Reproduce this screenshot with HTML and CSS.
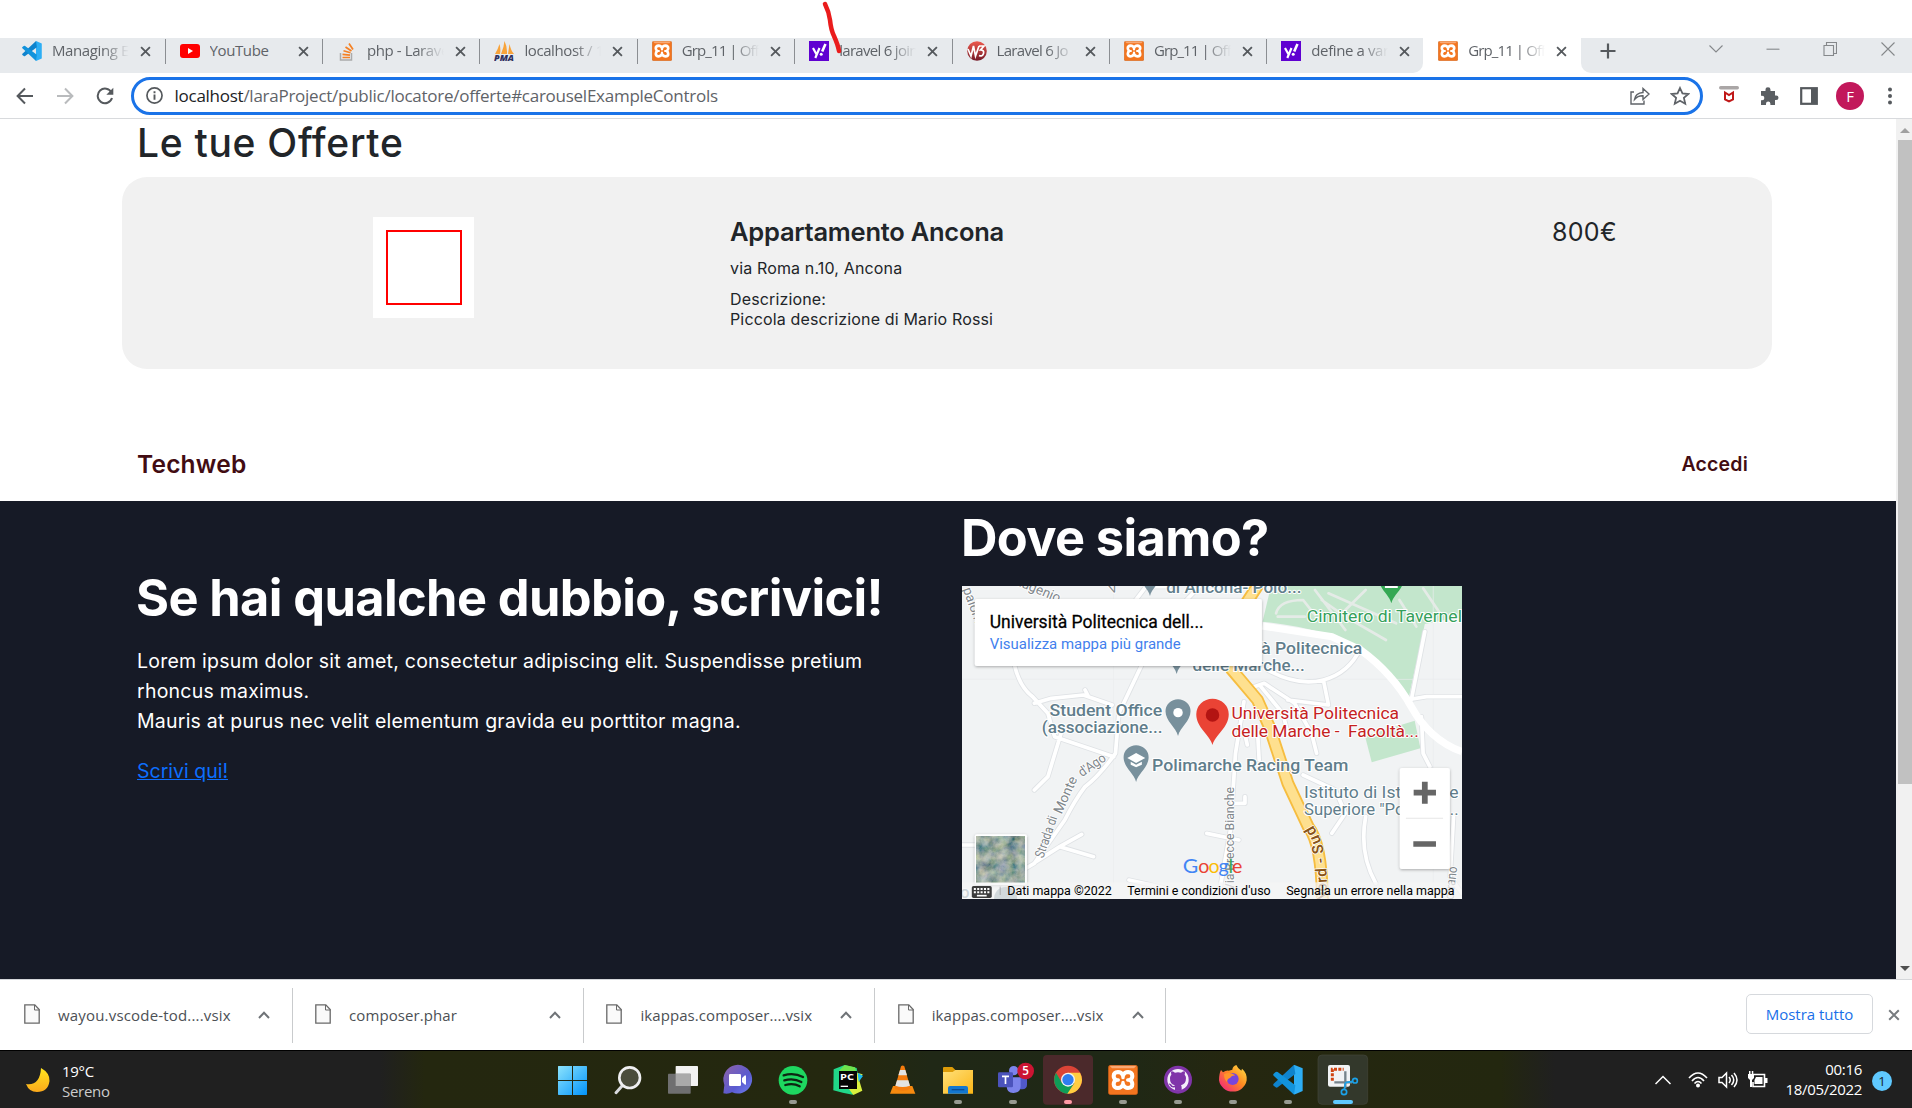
FILE: index.html
```html
<!DOCTYPE html>
<html lang="it">
<head>
<meta charset="utf-8">
<title>Grp_11 | Offerte</title>
<link rel="stylesheet" href="styles.css">
</head>
<body>
<svg class="defs" width="0" height="0">
  <defs>
    <symbol id="close" viewBox="0 0 12 12"><path d="M1.2 1.2 10.8 10.8M10.8 1.2 1.2 10.8" fill="none" stroke="currentColor" stroke-width="2"/></symbol>
    <symbol id="xampp" viewBox="0 0 90 90">
      <rect x="1" y="1" width="88" height="88" rx="7" fill="#f3751f" stroke="#c25a17" stroke-width="2"/><path d="M5 2h80l-7 8H12z" fill="#f9a974"/>
      <path d="M45 31Q40 21 30 21Q17 22 17 33Q17 41 24 45Q17 49 17 58Q18 69 30 69Q40 69 45 59Q50 69 60 69Q73 69 73 58Q73 49 66 45Q73 41 73 33Q73 22 60 21Q50 21 45 31Z" fill="#f3751f" stroke="#fff" stroke-width="12" stroke-linejoin="round"/>
      <path d="M22 45H31M59 45H68M45 28V38M45 52V62" stroke="#fff" stroke-width="10" stroke-linecap="round"/>
    </symbol>
    <symbol id="vscode" viewBox="0 0 90 90">
      <path d="M63 0 89 11V79L63 90Z" fill="#2daef5"/><path d="M63 0 2 57q-3 3 0 6l6 5q3 2 6 0L67 28Z" fill="#0f83cd"/><path d="M63 90 2 33q-3-3 0-6l6-5q3-2 6 0L67 62Z" fill="#1293dc"/>
    </symbol>
    <symbol id="yahoo" viewBox="0 0 20 20"><rect width="20" height="20" fill="#5f01d1"/><path d="M4 7 7.3 13M10.5 7 6.3 17" stroke="#fff" stroke-width="2.2" fill="none"/><path d="m16.5 3-3.3 7.5" stroke="#fff" stroke-width="2.6"/><circle cx="12.2" cy="13.3" r="1.5" fill="#fff"/></symbol>
    <symbol id="file" viewBox="0 0 16 20"><path d="M.8.8h10L15.2 5.500V19.200H.8z" fill="#fafafa" stroke="#696969" stroke-width="1.300"/><path d="M10.500 1v5h5" fill="none" stroke="#696969"/></symbol>
    <symbol id="up" viewBox="0 0 12 8"><path d="M1 7 6 1.800 11 7" fill="none" stroke="#6f7377" stroke-width="2"/></symbol>
    <linearGradient id="win" x1="0" y1="0" x2="1" y2="1"><stop stop-color="#8ce3fd"/><stop offset="1" stop-color="#0294fb"/></linearGradient>
    <linearGradient id="moon" x1="0" y1="0" x2="0" y2="1"><stop stop-color="#ffe51f"/><stop offset="1" stop-color="#fba91b"/></linearGradient>
    <linearGradient id="chat" x1="0" y1="0" x2="1" y2="1"><stop stop-color="#8e62a8"/><stop offset=".6" stop-color="#5b5bd0"/><stop offset="1" stop-color="#6e7ff0"/></linearGradient>
    <linearGradient id="folder" x1="0" y1="0" x2="1" y2="1"><stop stop-color="#ffe07a"/><stop offset="1" stop-color="#fbb616"/></linearGradient>
    <linearGradient id="fox" x1="1" y1="0" x2="0" y2="1"><stop stop-color="#ffe84a"/><stop offset=".45" stop-color="#ff8a20"/><stop offset="1" stop-color="#f0148c"/></linearGradient>
    <linearGradient id="w3" x1="0" y1="0" x2="0" y2="1"><stop stop-color="#ef5a4e"/><stop offset="1" stop-color="#741a28"/></linearGradient>
  </defs>
</svg>

<div class="tabs">
  <div class="tab"><svg class="fav"><use href="#vscode"/></svg><span class="label">Managing Ex</span><svg class="x"><use href="#close"/></svg></div>
  <div class="tab"><svg class="fav" viewBox="0 0 20 20"><rect y="3" width="20" height="14" rx="3" fill="#f00"/><path d="M8 7v6l5-3z" fill="#fff"/></svg><span class="label full">YouTube</span><svg class="x"><use href="#close"/></svg></div>
  <div class="tab"><svg class="fav" viewBox="0 0 20 20"><path d="M3.500 12v7h11v-7" fill="none" stroke="#aaa" stroke-width="1.500"/><path d="M5.500 16.500h7.500M5.500 13.300l7.500.8M6.500 9.800l7 2M8.500 6l6 4M12 2.500l4 6" stroke="#f48024" stroke-width="1.700"/></svg><span class="label">php - Larave</span><svg class="x"><use href="#close"/></svg></div>
  <div class="tab"><svg class="fav" viewBox="0 0 20 20"><path d="M1 13Q4 8 5.500 3Q7 8 6 13zM7 13Q10 6 10.500 0Q13.500 6 13 13zM14 13 15.500 3Q17 10 20 13z" fill="#f8a33a"/><text x="0" y="19.500" font-size="8" font-weight="800" font-style="italic" fill="#2e3060" textLength="20" lengthAdjust="spacingAndGlyphs">PMA</text></svg><span class="label">localhost / 1</span><svg class="x"><use href="#close"/></svg></div>
  <div class="tab"><svg class="fav"><use href="#xampp"/></svg><span class="label tight">Grp_11 | Off</span><svg class="x"><use href="#close"/></svg></div>
  <div class="tab"><svg class="fav"><use href="#yahoo"/></svg><span class="label snug">laravel 6 join</span><svg class="x"><use href="#close"/></svg></div>
  <div class="tab"><svg class="fav" viewBox="0 0 20 20"><circle cx="10" cy="10" r="9.800" fill="url(#w3)"/><path d="M1 8 4 15 6.500 5 8.500 15 12 5M12 5h5l-3.500 4q4 0 3 3.500t-4.500 2" fill="none" stroke="#fff" stroke-width="1.700"/></svg><span class="label snug">Laravel 6 Jo</span><svg class="x"><use href="#close"/></svg></div>
  <div class="tab"><svg class="fav"><use href="#xampp"/></svg><span class="label tight">Grp_11 | Off</span><svg class="x"><use href="#close"/></svg></div>
  <div class="tab last"><svg class="fav"><use href="#yahoo"/></svg><span class="label">define a var</span><svg class="x"><use href="#close"/></svg></div>
  <div class="tab active"><svg class="fav"><use href="#xampp"/></svg><span class="label tight">Grp_11 | Off</span><svg class="x"><use href="#close"/></svg></div>
  <div class="strip-end">
    <svg class="plus" viewBox="0 0 16 16"><path d="M8 .5v15M.5 8h15" stroke="#55595d" stroke-width="2.200"/></svg>
    <div class="wincontrols">
      <svg viewBox="0 0 14 14"><path d="M.5 3.500 7 10 13.500 3.500"/></svg>
      <svg viewBox="0 0 14 14"><path d="M.5 7.200h13"/></svg>
      <svg viewBox="0 0 14 14"><path d="M1 3.500h9.500v10H1zM3.500 3.500v-3h10v11h-3"/></svg>
      <svg viewBox="0 0 14 14"><path d="M.5.5l13 13M13.500.5l-13 13"/></svg>
    </div>
  </div>
</div>

<div class="toolbar">
  <div class="navbuttons">
    <svg viewBox="0 0 18 18"><path d="M17 9H2M9 1.500 1.600 9 9 16.500" stroke="#55595d"/></svg>
    <svg viewBox="0 0 18 18"><path d="M1 9h15M9 1.500 16.400 9 9 16.500" stroke="#b9bbbd"/></svg>
    <svg viewBox="0 0 18 18"><path d="M15.500 5.500A7.300 7.300 0 1 0 16 11" stroke="#55595d"/><path d="M17.300.8v7h-7z" fill="#55595d"/></svg>
  </div>
  <div class="omnibox">
    <svg class="info" viewBox="0 0 16 16"><circle cx="8" cy="8" r="7.100" fill="none" stroke="#55595d" stroke-width="1.600"/><path d="M8 7v5M8 4v1.800" stroke="#55595d" stroke-width="1.800"/></svg>
    <span class="url"><b>localhost</b>/laraProject/public/locatore/offerte#carouselExampleControls</span>
    <svg class="share" viewBox="0 0 20 18"><path d="M4 5H1v12h13v-3.500M4.500 12.500Q5.500 6 13 5.500V1.500L19 7l-6 5.500V8.800Q8 8.500 4.500 12.500z" fill="none" stroke="#5f6368" stroke-width="1.400"/></svg>
    <svg class="star" viewBox="0 0 18 18"><path d="M9 1.800l2.200 4.900 5.300.5-4 3.500 1.200 5.200L9 13.200l-4.700 2.700 1.200-5.200-4-3.500 5.300-.5z" fill="none" stroke="#5f6368" stroke-width="1.600"/></svg>
  </div>
  <div class="extensions">
    <svg viewBox="0 0 20 20"><rect y="0" width="20" height="3.400" rx="1.700" fill="#aaa6a6"/><path d="M6 6.500v7l4 2 4-2v-7l-4 2.500z" fill="none" stroke="#c01818" stroke-width="2"/></svg>
    <svg viewBox="0 0 20 20"><path d="M2 5h4.500V3.800a2.500 2.500 0 0 1 5 0V5H16v4.500h1.200a2.300 2.300 0 0 1 0 4.600H16V19h-4.600v-1.200a2.200 2.200 0 0 0-4.400 0V19H2v-4.800h1.100a2.200 2.200 0 0 0 0-4.500H2z" fill="#5a5e62"/></svg>
    <svg viewBox="0 0 20 20"><rect x="2.200" y="2.200" width="15.600" height="15.600" fill="none" stroke="#55595d" stroke-width="2.200"/><path d="M12 2h6v16h-6z" fill="#55595d"/></svg>
    <span class="avatar">F</span>
    <svg viewBox="0 0 20 20"><g fill="#55595d"><circle cx="10" cy="3.500" r="2"/><circle cx="10" cy="10" r="2"/><circle cx="10" cy="16.500" r="2"/></g></svg>
  </div>
</div>

<div class="viewport">
  <main class="page">
    <h1>Le tue Offerte</h1>
    <article class="offer">
      <div class="thumb"><div class="frame"></div></div>
      <div class="details">
        <h2>Appartamento Ancona</h2>
        <p class="addr">via Roma n.10, Ancona</p>
        <p class="desc">Descrizione:<br><span>Piccola descrizione di Mario Rossi</span></p>
      </div>
      <div class="price">800€</div>
    </article>
    <nav><span class="brand">Techweb</span><span class="login">Accedi</span></nav>
    <footer>
      <section class="contact">
        <h3>Se hai qualche dubbio, scrivici!</h3>
        <p>Lorem ipsum dolor sit amet, consectetur adipiscing elit. Suspendisse pretium<br>rhoncus maximus.<br>Mauris at purus nec velit elementum gravida eu porttitor magna.</p>
        <a href="#">Scrivi qui!</a>
      </section>
      <section class="where">
        <h3>Dove siamo?</h3>
        <svg class="map" viewBox="36 258 1479 939" preserveAspectRatio="none">
          <defs>
            <filter id="sh" x="-10%" y="-10%" width="120%" height="130%"><feDropShadow dx="0" dy="3" stdDeviation="5" flood-opacity=".3"/></filter>
            <filter id="terrain" x="0" y="0" width="100%" height="100%"><feTurbulence type="fractalNoise" baseFrequency=".035" numOctaves="4" seed="8"/><feColorMatrix values=".75 0 0 0 -.06 .6 .15 0 0 .02 .4 0 .3 0 0 0 0 0 0 1"/></filter>
            <path id="pin" d="M0 110C-6 84-37 66-37 36A37 36 0 0 1 37 36C37 66 6 84 0 110Z"/>
          </defs>
          <rect x="36" y="258" width="1479" height="939" fill="#f1f3f4"/>
          <path d="M950 258H1515V350L1405 372 1358 590Q1290 490 1215 445Q1110 385 925 365Z" fill="#c3e6cc"/>
          <path d="M1228 708 1375 662 1392 745 1248 787Z" fill="#c3e6cc"/>
          <path d="M36 538H1515M484 258V1197M1430 258V1197" stroke="#eaeced" stroke-width="2"/>
          <g fill="none" stroke-linecap="round" stroke-linejoin="round">
            <path stroke="#dfe2e5" stroke-width="16" d="M190 490Q205 560 245 590L290 640 310 710 485 770M570 490 500 640 490 760Q440 830 400 860Q370 900 340 960L250 1090 150 1150M36 1035H90M250 870 290 830 335 680M250 610 300 595 395 585 480 615M400 570 410 590M255 1085 325 1040 390 1003M325 1040 425 1070M490 380 580 260H650M740 258 700 300M870 605 845 760 830 990 800 1160M760 1000 855 1020M835 910H873V890M900 560 930 550 1020 610 1070 700 1085 760M920 560 985 640 1000 700M910 690 915 780M870 690 880 735M940 510Q1030 560 1105 540T1215 445M1105 540 1120 615 1000 600M1365 600 1405 395M1350 600 1410 590H1515M1395 650 1400 760 1420 800M1045 825 1140 870 1170 940 1130 1000M1230 950Q1210 1060 1260 1150M1490 950 1480 1130 1515 1180M530 1140 640 1165"/>
            <path stroke="#fff" stroke-width="11" d="M190 490Q205 560 245 590L290 640 310 710 485 770M570 490 500 640 490 760Q440 830 400 860Q370 900 340 960L250 1090 150 1150M36 1035H90M250 870 290 830 335 680M250 610 300 595 395 585 480 615M400 570 410 590M255 1085 325 1040 390 1003M325 1040 425 1070M490 380 580 260H650M740 258 700 300M870 605 845 760 830 990 800 1160M760 1000 855 1020M835 910H873V890M900 560 930 550 1020 610 1070 700 1085 760M920 560 985 640 1000 700M910 690 915 780M870 690 880 735M940 510Q1030 560 1105 540T1215 445M1105 540 1120 615 1000 600M1365 600 1405 395M1350 600 1410 590H1515M1395 650 1400 760 1420 800M1045 825 1140 870 1170 940 1130 1000M1230 950Q1210 1060 1260 1150M1490 950 1480 1130 1515 1180M530 1140 640 1165"/>
            <path d="M965 340Q975 300 1045 300L1080 345M970 350H1050M1100 300 1170 350 1290 420M1120 280 1320 370M1170 330 1230 270M1330 300 1380 380M1400 265 1450 340M1080 270 1170 390" stroke="#e5ebe7" stroke-width="8"/>
          </g>
          <path d="M925 378 1130 410 1215 450Q1310 520 1365 620T1515 755" fill="none" stroke="#fff" stroke-width="22"/>
          <path d="M915 250 870 320 860 430Q830 470 835 510L910 600 945 680 1000 850 1060 980Q1100 1030 1102 1197" fill="none" stroke="#f6bd40" stroke-width="38"/>
          <path d="M915 250 870 320 860 430Q830 470 835 510L910 600 945 680 1000 850 1060 980Q1100 1030 1102 1197" fill="none" stroke="#fee08f" stroke-width="27"/>
          <g class="road">
            <text transform="translate(38 268) rotate(70)">palom</text>
            <text transform="translate(190 252) rotate(23)">Eugenio</text>
            <text transform="translate(475 282) rotate(-20)">V</text>
            <text transform="translate(276 1076) rotate(-71)" textLength="130" lengthAdjust="spacingAndGlyphs">Strada di</text><text transform="translate(330 944) rotate(-66)" textLength="118" lengthAdjust="spacingAndGlyphs">Monte</text><text transform="translate(391 832) rotate(-35)" textLength="90" lengthAdjust="spacingAndGlyphs">d'Ago</text>
            <text transform="translate(840 1173) rotate(-90)" textLength="312" lengthAdjust="spacingAndGlyphs">Via Brecce Bianche</text>
            <text transform="translate(1490 1200) rotate(-84)" textLength="100" lengthAdjust="spacingAndGlyphs">orrano</text>
          </g>
          <g class="sud"><text transform="translate(1100 1190) rotate(-92)" y="15">N</text><text transform="translate(1100 1162) rotate(-92)" y="15">o</text><text transform="translate(1100 1140) rotate(-93)" y="15">r</text><text transform="translate(1099 1117) rotate(-93)" y="15">d</text><text transform="translate(1096 1082) rotate(-97)" y="15">-</text><text transform="translate(1089 1048) rotate(-102)" y="15">S</text><text transform="translate(1081 1020) rotate(-112)" y="15">u</text><text transform="translate(1067 994) rotate(-120)" y="15">d</text></g>
          <g class="poi">
            <use href="#pin" transform="translate(592 178)"/><use href="#pin" transform="translate(671 412)"/><use href="#pin" transform="translate(675 598)"/><use href="#pin" transform="translate(551 736)"/>
            <circle cx="675" cy="638" r="14" fill="#fff"/><path d="M525 774 551 759 578 774 551 789ZM535 785 551 794 568 785V794L551 802 535 794Z" fill="#fff"/>
            <text x="640" y="278" textLength="400" lengthAdjust="spacingAndGlyphs">di Ancona- Polo...</text>
            <text x="716" y="461" textLength="504" lengthAdjust="spacingAndGlyphs">Università Politecnica</text>
            <text x="718" y="514" textLength="332" lengthAdjust="spacingAndGlyphs">delle Marche...</text>
            <text x="295" y="647" textLength="333" lengthAdjust="spacingAndGlyphs">Student Office</text>
            <text x="272" y="700" textLength="357" lengthAdjust="spacingAndGlyphs">(associazione...</text>
            <text x="598" y="812" textLength="581" lengthAdjust="spacingAndGlyphs">Polimarche Racing Team</text>
            <g font-weight="400"><text x="1048" y="894" textLength="457" lengthAdjust="spacingAndGlyphs">Istituto di Istruzione</text>
            <text x="1048" y="946" textLength="457" lengthAdjust="spacingAndGlyphs">Superiore "Podesti-...</text></g>
            <circle cx="165" cy="1195" r="34"/><text x="30" y="1194">o</text>
          </g>
          <use href="#pin" transform="translate(1306 200)" fill="#34a853"/><path d="M1287 258H1325V264H1287Z" fill="#fff"/>
          <text class="green" x="1056" y="366" textLength="459" lengthAdjust="spacingAndGlyphs">Cimitero di Tavernel</text>
          <path d="M777 735C769 704 729 684 729 643A48 47 0 0 1 825 643C825 684 785 704 777 735Z" fill="#ea4335"/><circle cx="777" cy="645" r="20" fill="#b31412"/>
          <text class="red" x="833" y="657" textLength="496" lengthAdjust="spacingAndGlyphs">Università Politecnica</text>
          <text class="red" x="833" y="710" textLength="554" lengthAdjust="spacingAndGlyphs">delle Marche -  Facoltà...</text>
          <rect x="74" y="297" width="849" height="201" rx="6" fill="#fff" filter="url(#sh)"/>
          <text x="118" y="383" class="maptitle" textLength="633" lengthAdjust="spacingAndGlyphs">Università Politecnica dell...</text>
          <text x="118" y="447" class="maplink" textLength="565" lengthAdjust="spacingAndGlyphs">Visualizza mappa più grande</text>
          <rect x="1331" y="804" width="148" height="303" rx="6" fill="#fff" filter="url(#sh)"/>
          <path d="M1372 878H1438M1405 845V911M1371 1032H1438" stroke="#666" stroke-width="17"/><path d="M1349 955H1459" stroke="#e6e6e6" stroke-width="3"/>
          <rect x="74" y="1003" width="154" height="152" rx="6" fill="#fff" filter="url(#sh)"/><rect x="80" y="1008" width="142" height="140" filter="url(#terrain)"/>
          <rect x="36" y="1147" width="1479" height="50" fill="#f5f5f5" opacity=".72"/>
          <g class="google"><text x="689" y="1118" fill="#4285f4" textLength="46" lengthAdjust="spacingAndGlyphs">G</text><text x="735" y="1118" fill="#ea4335">o</text><text x="765" y="1118" fill="#fbbc05">o</text><text x="795" y="1118" fill="#4285f4">g</text><text x="824" y="1118" fill="#34a853">l</text><text x="835" y="1118" fill="#ea4335">e</text></g>
          <rect x="65" y="1158" width="59" height="36" rx="5" fill="#3c3c3c"/><path d="M71 1167H119M71 1177H119" stroke="#fff" stroke-width="6" stroke-dasharray="6 4"/><path d="M80 1187H109" stroke="#fff" stroke-width="5"/><path d="M149 1160V1185" stroke="#999" stroke-width="2"/>
          <g class="legal"><text x="170" y="1185" textLength="309" lengthAdjust="spacingAndGlyphs">Dati mappa ©2022</text><text x="525" y="1185" textLength="424" lengthAdjust="spacingAndGlyphs">Termini e condizioni d'uso</text><text x="995" y="1185" textLength="498" lengthAdjust="spacingAndGlyphs">Segnala un errore nella mappa</text></g>
        </svg>
      </section>
    </footer>
  </main>
  <div class="scrollbar"><i class="arr-up"></i><div class="thumbbar"></div><i class="arr-down"></i></div>
</div>

<div class="downloads">
  <div class="dl"><svg class="file"><use href="#file"/></svg><span>wayou.vscode-tod....vsix</span><svg class="up"><use href="#up"/></svg></div>
  <div class="dl"><svg class="file"><use href="#file"/></svg><span>composer.phar</span><svg class="up"><use href="#up"/></svg></div>
  <div class="dl"><svg class="file"><use href="#file"/></svg><span>ikappas.composer....vsix</span><svg class="up"><use href="#up"/></svg></div>
  <div class="dl"><svg class="file"><use href="#file"/></svg><span>ikappas.composer....vsix</span><svg class="up"><use href="#up"/></svg></div>
  <button>Mostra tutto</button>
  <svg class="dlclose"><use href="#close"/></svg>
</div>

<div class="taskbar">
  <div class="weather">
    <svg viewBox="0 0 24 24"><path d="M15 0Q24 5 23.500 13Q22 24 11 24Q3 24 0 16Q14 18 15 0z" fill="url(#moon)"/></svg>
    <div><div class="temp">19°C</div><div class="sky">Sereno</div></div>
  </div>
  <div class="apps">
    <svg viewBox="15 30 165 174"><path d="M54 79q0-1 2-1h40v42H54zM99 78h40q2 0 2 2v40H99zM54 123h42v42H56q-2 0-2-2zM99 123h42v40q0 2-2 2H99z" fill="url(#win)"/></svg>
    <svg viewBox="180 30 165 174"><path d="M246 138 228 158" stroke="#d9dade" stroke-width="9" stroke-linecap="round"/><circle cx="269" cy="113" r="31" fill="#4b4d3c" stroke="#efeff1" stroke-width="8"/></svg>
    <svg viewBox="345 30 165 174"><rect x="407" y="78" width="67" height="60" rx="2" fill="#f2f2f2"/><rect x="384" y="101" width="68" height="60" rx="2" fill="#6f6f70"/><rect x="407" y="101" width="45" height="37" fill="#aaa"/></svg>
    <svg viewBox="510 30 165 174"><path d="M550 160 553 135Q545 112 558 93A43 43 0 1 1 576 157Q565 163 550 160Z" fill="url(#chat)"/><rect x="567" y="102" width="36" height="36" rx="4" fill="#fff"/><path d="M606 114 615 106Q618 106 618 109V132Q618 135 615 134L606 126Z" fill="#fff"/></svg>
    <svg viewBox="675 30 165 174"><circle cx="759" cy="121" r="43" fill="#1ed760"/><path d="M731 106Q762 97 789 111M733 121Q761 113 784 126M736 135Q760 128 779 139" fill="none" stroke="#0d2512" stroke-width="7" stroke-linecap="round"/><rect class="run" x="747" y="180" width="24" height="12" rx="6"/></svg>
    <svg viewBox="840 30 165 174"><path d="M881 88 914 75 950 84 957 128 938 164 908 158 880 151Z" fill="#21d789"/><path d="M914 75 945 82 950 100 897 92Z" fill="#6fe34c"/><path d="M950 98 968 103 958 122 967 152 940 165 925 145Z" fill="#d9ef3d"/><path d="M953 98 969 108 956 125Z" fill="#16b8ee"/><rect x="897" y="93" width="54" height="54" fill="#050505"/><text x="900" y="120" font-size="26" font-weight="700" fill="#fff" textLength="42" lengthAdjust="spacingAndGlyphs">PC</text><path d="M902 139h22" stroke="#fff" stroke-width="4"/></svg>
    <svg viewBox="1005 30 165 174"><path d="M1059 138H1117L1126 161H1050Z" fill="#f78a0f"/><path d="M1083 79Q1088 74 1093 79L1112 146Q1088 158 1064 146Z" fill="#f57c0e"/><path d="M1080 90H1096L1101 106H1075ZM1071 121H1105L1110 137Q1088 145 1066 137Z" fill="#e3e3e3"/></svg>
    <svg viewBox="-30 30 165 174"><path d="M9 84q0-3 3-3h25l10 10v20H9z" fill="#dc9b08"/><path d="M9 96H38L46 90H99V161H9Z" fill="url(#folder)"/><path d="M24 161V144q0-6 6-6H78q6 0 6 6V161z" fill="#1377cf"/><path d="M35 149H73" stroke="#0a4c94" stroke-width="4"/><rect class="run" x="42" y="180" width="24" height="12" rx="6"/></svg>
    <svg viewBox="135 30 165 174"><circle cx="221" cy="92" r="14" fill="#7b83eb"/><circle cx="248" cy="103" r="10" fill="#5059c9"/><path d="M236 114H261V134q0 13-14 14H236z" fill="#5059c9"/><path d="M200 112H242V138q0 20-21 21t-21-21z" fill="#7b83eb"/><rect x="174" y="97" width="45" height="45" rx="4" fill="#4b53bc"/><path d="M186 109H207M196.500 109V132" stroke="#fff" stroke-width="5"/><circle cx="257" cy="93" r="25" fill="#cc1433"/><text x="247" y="106" fill="#fff" font-size="35" font-weight="600">5</text><rect class="run" x="207" y="180" width="24" height="12" rx="6"/></svg>
    <svg viewBox="300 30 165 174"><rect x="309" y="45" width="150" height="149" rx="12" fill="#4b292b"/><circle cx="384" cy="119" r="42" fill="#db4437"/><path d="M348 98A42 42 0 0 0 384 161L403 129 384 119 366 129Z" fill="#0f9d58"/><path d="M384 98H420A42 42 0 0 1 382 161L403 130Z" fill="#ffcd40"/><circle cx="384" cy="119" r="21" fill="#f4f4f4"/><circle cx="384" cy="119" r="17" fill="#2f7df0"/><rect x="372" y="180" width="24" height="12" rx="6" fill="#ff9aa5"/></svg>
    <svg viewBox="465 30 165 174"><use href="#xampp" x="504" y="75" width="90" height="90"/><rect class="run" x="537" y="180" width="24" height="12" rx="6"/></svg>
    <svg viewBox="630 30 165 174"><circle cx="714" cy="119" r="42" fill="#8034a9"/><circle cx="714" cy="119" r="32" fill="#f4effa"/><path d="M705 152V142Q694 145 689 135L686 131Q692 129 697 137Q701 140 705 136Q689 133 690 114Q690 108 694 104Q692 98 694 94Q699 94 705 98Q714 96 723 98Q729 94 734 94Q736 98 734 104Q738 108 738 114Q738 132 723 136Q725 138 725 143V152Z" fill="#8034a9"/><rect class="run" x="702" y="180" width="24" height="12" rx="6"/></svg>
    <svg viewBox="795 30 165 174"><path d="M843 90 849 97Q857 91 866 92L877 89Q878 79 889 75Q893 85 904 92L906 86Q922 99 920 121A42 40 0 0 1 837 121Q837 101 843 90Z" fill="url(#fox)"/><circle cx="878" cy="117" r="18" fill="#7845dc"/><path d="M852 103Q867 93 886 106Q874 107 870 114Q862 116 861 126Q852 118 852 103Z" fill="#ff942a"/><rect class="run" x="867" y="180" width="24" height="12" rx="6"/></svg>
    <svg viewBox="960 30 165 174"><use href="#vscode" x="999" y="74" width="90" height="90"/><rect class="run" x="1032" y="180" width="24" height="12" rx="6"/></svg>
    <svg viewBox="1125 30 165 174"><rect x="1134" y="45" width="149" height="148" rx="12" fill="#33382b" stroke="#42463b" stroke-width="2"/><rect x="1164" y="75" width="66" height="65" rx="6" fill="#f1f3f5"/><path d="M1177 122V88H1211" fill="none" stroke="#d04311" stroke-width="9" stroke-dasharray="9 4"/><path d="M1216 94V145M1183 127H1236" stroke="#77838b" stroke-width="7"/><g fill="none" stroke="#1ba1e8" stroke-width="5"><circle cx="1245" cy="122" r="7"/><circle cx="1212" cy="156" r="8"/><path d="M1216 128 1238 124M1216 128 1213 148"/></g><rect x="1179" y="180" width="60" height="12" rx="6" fill="#5fc9ff"/></svg>
  </div>
  <div class="tray">
    <svg class="t-up" viewBox="0 0 16 10"><path d="M.5 9 8 1.500 15.500 9" fill="none" stroke="#fff" stroke-width="1.500"/></svg>
    <svg class="t-i" viewBox="0 0 20 18"><path d="M1 7Q10-3 19 7M4 10Q10 3 16 10M6.500 12.500Q10 8.500 13.500 12.500" fill="none" stroke="#fff" stroke-width="1.600"/><circle cx="10" cy="14.500" r="2" fill="#fff"/></svg>
    <svg class="t-i" viewBox="0 0 20 18"><path d="M1 6.500h3L8.500 2v14L4 11.500H1zM11 6q2.500 3 0 6M13.500 4q4.500 5 0 10M16 2q6 7 0 14" fill="none" stroke="#fff" stroke-width="1.500"/></svg>
    <svg class="t-i" viewBox="0 0 20 18"><path d="M5 3.500h11.500v12H5V11" fill="none" stroke="#fff" stroke-width="1.600"/><path d="M8 6h6.500v7H6.500V9zM17 7h2.500v5H17zM0 3h6v4L4 9v7H2V9L0 7zM1 0h1.500v3H1zM3.800 0h1.500v3H3.800z" fill="#fff"/></svg>
    <div class="clock"><div class="time">00:16</div><div class="date">18/05/2022</div></div>
    <span class="notif">1</span>
  </div>
</div>
<svg class="pen" viewBox="0 0 30 60"><path d="M5 4Q9 12 10 20Q11 30 14 36Q18 45 19 51" fill="none" stroke="#ea1c1c" stroke-width="4.500" stroke-linecap="round"/></svg>
</body>
</html>
```
FILE: styles.css
```css
* { box-sizing: border-box; margin: 0; padding: 0; }
html, body { width: 1912px; height: 1108px; overflow: hidden; }
body { display: flex; flex-direction: column; background: #fff; font-family: "Open Sans", "Noto Sans", sans-serif; padding-top: 38px; }
svg { flex: none; display: block; }
.defs { position: absolute; }

/* browser tabs */
.tabs { display: flex; height: 35px; flex: none; background: #fff; }
.tab { width: 157.400px; height: 35px; flex: none; display: flex; padding: 3px 0 0 14px; background: #e7eaed; position: relative; }
.tab:first-child { width: 165.600px; padding-left: 22px; }
.tab::after { content: ""; position: absolute; right: 0; top: 1px; width: 1px; height: 25px; background: #8b8e92; }
.tab.last { border-radius: 0 0 10px 0; width: 156px; }
.tab.last::after, .tab.active::after { display: none; }
.tab.active { background: #fff; width: 157.500px; padding-left: 15px; }
.fav { width: 20px; height: 20px; }
.label { width: 77px; margin-left: 10px; font-size: 15px; line-height: 19px; color: #5f6368; white-space: nowrap; overflow: hidden; letter-spacing: -.4px; -webkit-mask-image: linear-gradient(90deg, #000 65%, transparent); mask-image: linear-gradient(90deg, #000 65%, transparent); }
.label.tight { letter-spacing: -.9px; }
.label.snug { letter-spacing: -.7px; }
.label.full { -webkit-mask-image: none; mask-image: none; }
.x { width: 11px; height: 11px; margin: 5px 0 0 11px; color: #55595d; }
.strip-end { flex: 1; display: flex; background: #e7eaed; border-radius: 0 0 0 10px; padding-left: 19px; }
.plus { width: 16px; height: 16px; margin-top: 5px; }
.wincontrols { display: flex; gap: 43.300px; margin: 4px 0 0 93px; }
.wincontrols svg { width: 14px; height: 14px; fill: none; stroke: #85888b; stroke-width: 1.100; }

/* browser toolbar */
.toolbar { height: 46px; flex: none; display: flex; align-items: center; border-bottom: 1px solid #d8dadd; }
.navbuttons { display: flex; flex: none; gap: 22px; padding-left: 16px; width: 131px; }
.navbuttons svg { width: 18px; height: 18px; fill: none; stroke-width: 2; }
.omnibox { width: 1572px; flex: none; height: 38px; border: 3px solid #1a73e8; border-radius: 19px; display: flex; align-items: center; padding: 0 10px 0 12px; }
.info { width: 17px; height: 17px; }
.url { flex: 1; margin-left: 11.500px; font-size: 17px; line-height: 24px; color: #5f6368; letter-spacing: -.26px; white-space: nowrap; }
.url b { color: #202124; font-weight: 400; }
.share { width: 20px; height: 18px; }
.star { width: 20px; height: 20px; margin-left: 20px; }
.extensions { display: flex; flex: none; align-items: center; padding-left: 16px; }
.extensions svg { width: 20px; height: 20px; margin-right: 20px; }
.avatar { width: 28px; height: 28px; border-radius: 50%; background: #c2185b; color: #fff; font-size: 15px; line-height: 28px; text-align: center; margin: 0 16px 0 -3px; }

/* page */
.viewport { height: 860px; flex: none; display: flex; font-family: Inter, sans-serif; color: #212529; }
.page { width: 1896px; }
h1 { font-size: 39px; line-height: 47px; font-weight: 500; margin-left: 137px; letter-spacing: .7px; }
.offer { margin: 11px 0 0 122px; width: 1650px; height: 192px; padding-top: 40px; background: #f1f1f1; border-radius: 25px; display: flex; }
.thumb { width: 101px; height: 101px; background: #fff; margin-left: 251px; padding: 13px; }
.frame { width: 76px; height: 75px; border: 2px solid #f00; }
.details { margin-left: 256px; width: 822px; font-size: 16px; line-height: 20px; letter-spacing: .15px; }
h2 { font-size: 25.500px; line-height: 30px; font-weight: 600; letter-spacing: -.25px; }
.addr { margin-top: 11px; }
.desc { margin-top: 11px; }
.price { font-size: 25px; line-height: 31px; letter-spacing: .3px; }
nav { height: 132px; padding: 77px 148px 0 137px; display: flex; justify-content: space-between; color: #420c12; line-height: 36px; font-weight: 600; }
.brand { font-size: 24.500px; letter-spacing: .2px; }
.login { font-size: 19.500px; letter-spacing: .2px; }
footer { height: 478px; background: #161a26; color: #fff; display: flex; padding-left: 137px; }
.contact { width: 825px; padding-top: 67px; font-size: 19.500px; line-height: 30px; }
h3 { font-size: 50.500px; line-height: 60px; font-weight: 700; letter-spacing: -.62px; white-space: nowrap; margin-left: -1px; }
.contact p { margin: 18px 0 20px; letter-spacing: .23px; }
a { color: #0d6efd; }
.where { padding-top: 7px; }
.map { width: 500px; height: 313px; margin-top: 18px; font-family: Roboto, sans-serif; overflow: hidden; }
.poi { fill: #78909c; font-size: 50px; font-weight: 500; }
.poi text { fill: #607d8b; }
.poi text, .green, .red { stroke: #fff; stroke-width: 6px; paint-order: stroke; }
.green { fill: #34a05a; font-size: 50px; }
.red { fill: #c5221f; font-size: 50px; white-space: pre; }
.road text { fill: #80868b; font-size: 40px; stroke: #fff; stroke-width: 5px; paint-order: stroke; }
.sud text { fill: #8a5416; font-size: 46px; font-weight: 600; text-anchor: middle; stroke: #fff; stroke-width: 4px; paint-order: stroke; }
.maptitle { font-size: 53px; font-weight: 400; fill: #000; stroke: #000; stroke-width: .8px; }
.maplink { font-size: 45px; fill: #427fed; }
.google { font-family: Lato, sans-serif; font-size: 58px; }
.legal { font-size: 39px; fill: #000; }

.scrollbar { width: 16px; background: #f1f1f1; display: flex; flex-direction: column; align-items: center; padding: 9px 0 8px 2px; }
.scrollbar i { width: 0; height: 0; border: 5px solid transparent; }
.scrollbar .arr-up { border-top: 0; border-bottom-color: #a0a0a0; }
.scrollbar .arr-down { border-bottom: 0; border-top-color: #505050; margin-top: auto; }
.thumbbar { width: 14px; height: 644px; margin-top: 7px; background: #c1c1c1; }

/* downloads shelf */
.downloads { height: 71px; flex: none; border-top: 1px solid #d5d7da; display: flex; padding-top: 8px; background: #fff; }
.dl { width: 291.300px; flex: none; height: 55px; border-right: 1px solid #c9cbcd; padding: 16px 0 0 24px; display: flex; }
.dl:first-child { width: 292.600px; }
.dl .file { width: 16px; height: 20px; }
.dl:not(:first-child) .file { margin-left: -1.500px; }
.dl span { width: 174px; margin-left: 18px; font-size: 15px; line-height: 23px; letter-spacing: .08px; color: #4c5055; white-space: nowrap; }
.dl:first-child span { letter-spacing: .18px; }
.up { width: 12px; height: 8px; margin: 7px 0 0 26px; }
button { margin: 6px 0 0 579.500px; width: 127px; height: 40px; border: 1px solid #d6d9dd; border-radius: 5px; background: #fff; color: #1a6fe8; font: 500 15px/20px "Open Sans", sans-serif; white-space: nowrap; }
.dlclose { width: 12px; height: 12px; margin: 21px 0 0 15px; color: #777b7f; }

/* taskbar */
.taskbar { height: 58px; flex: none; border-top: 1px solid #000; display: flex; color: #fff; background: linear-gradient(90deg, #202020 0, #202020 380px, #24270f 425px, #24280f 850px, #202816 930px, #1f2816 1120px, #252710 1230px, #23270f 1500px, #202020 1555px); }
.weather { width: 545px; display: flex; padding: 16px 0 0 26px; font-size: 15px; line-height: 20px; letter-spacing: -.3px; }
.weather svg { width: 24px; height: 24px; margin: 1px 12px 0 0; }
.weather > div { margin-top: -6px; }
.sky { color: #ccc; }
.apps { display: flex; width: 825px; margin-top: -1px; }
.apps svg { width: 55px; height: 58px; }
.run { fill: #979a91; }
.tray { display: flex; align-items: center; padding-left: 285px; }
.t-up { width: 16px; height: 10px; margin-right: 17px; }
.t-i { width: 20px; height: 18px; margin-right: 10px; }
.clock { width: 84px; text-align: right; font-size: 15px; line-height: 20px; letter-spacing: -.3px; margin-top: -2px; }
.notif { width: 20px; height: 20px; border-radius: 50%; background: #5fc9ff; color: #14232e; font-size: 13px; line-height: 20px; text-align: center; margin: 2px 0 0 10px; }

/* pen mark over the tab strip */
.pen { position: absolute; left: 820px; top: 0; width: 30px; height: 60px; }
```
